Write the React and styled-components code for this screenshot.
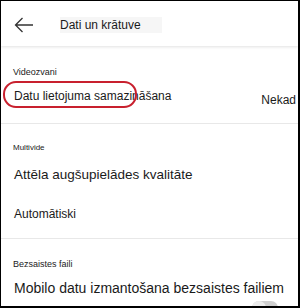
import styled, { createGlobalStyle } from 'styled-components';

const Global = createGlobalStyle`
  html, body { margin: 0; padding: 0; background: #fff; }
  body { font-family: "Liberation Sans", Arial, sans-serif; color: #1a1a1a; }
`;

const Frame = styled.div`
  width: 300px;
  height: 308px;
  box-sizing: border-box;
  border-style: solid;
  border-color: #000;
  border-width: 1px 2px 2px 1px;
  overflow: hidden;
  display: flex;
  flex-direction: column;
  background: #fff;
`;

const Header = styled.div`
  height: 45px;
  flex: none;
  display: flex;
  align-items: flex-start;
  padding: 16px 0 0 13px;
  box-sizing: border-box;
  box-shadow: 0 1px 3px rgba(0, 0, 0, 0.12);
  position: relative;
  z-index: 1;
`;

const Back = styled.button`
  border: none;
  background: none;
  padding: 0;
  width: 20px;
  height: 16px;
  display: flex;
  cursor: pointer;
`;

const Title = styled.span`
  margin-left: 26px;
  font-size: 12px;
  line-height: 16px;
  padding-right: 21px;
  background: #f6f6f6;
`;

const Section = styled.section`
  padding: ${(p) => p.$top}px 2px ${(p) => p.$bottom}px 12px;
  border-top: ${(p) => (p.$divided ? '1px solid #e8e8e8' : 'none')};
  display: flex;
  flex-direction: column;
`;

const Label = styled.div`
  font-size: ${(p) => p.$size}px;
  line-height: 1.15;
  color: #222;
`;

const Row = styled.div`
  display: flex;
  justify-content: space-between;
  align-items: flex-start;
  margin-top: ${(p) => p.$gap}px;
`;

const Primary = styled.span`
  position: relative;
  font-size: ${(p) => p.$size}px;
  line-height: 1.15;
  margin-left: 1px;
`;

const Value = styled.span`
  font-size: 12px;
  line-height: 1.15;
  margin-top: 4px;
`;

const Highlight = styled.span`
  position: absolute;
  left: -11px;
  top: -9px;
  width: 134px;
  height: 27px;
  border: 2px solid #c8202e;
  border-radius: 13px;
  box-sizing: border-box;
  pointer-events: none;
`;

const Toggle = styled.div`
  align-self: flex-end;
  margin: 5px 18px 0 0;
  width: 26px;
  height: 14px;
  border-radius: 7px;
  background: #cfcfcf;
  position: relative;
  &::before {
    content: '';
    position: absolute;
    left: 0;
    top: 0;
    width: 14px;
    height: 14px;
    border-radius: 50%;
    background: #ececec;
  }
`;

export default function App() {
  return (
    <>
      <Global />
      <Frame>
        <Header>
          <Back aria-label="Atpakaļ">
            <svg width="20" height="16" viewBox="0 0 20 16" fill="none">
              <path d="M19 8H1.5M8.5 1L1.5 8l7 7" stroke="#333" strokeWidth="1.3" />
            </svg>
          </Back>
          <Title>Dati un krātuve</Title>
        </Header>

        <Section $top={21} $bottom={15}>
          <Label $size={9}>Videozvani</Label>
          <Row $gap={13}>
            <Primary $size={12}>
              Datu lietojuma samazināšana
              <Highlight />
            </Primary>
            <Value>Nekad</Value>
          </Row>
        </Section>

        <Section $divided $top={19} $bottom={16}>
          <Label $size={8}>Multivide</Label>
          <Row $gap={15}>
            <Primary $size={13.5}>Attēla augšupielādes kvalitāte</Primary>
          </Row>
          <Row $gap={25}>
            <Primary $size={12}>Automātiski</Primary>
          </Row>
        </Section>

        <Section $divided $top={20} $bottom={0}>
          <Label $size={9}>Bezsaistes faili</Label>
          <Row $gap={11}>
            <Primary $size={14}>Mobilo datu izmantošana bezsaistes failiem</Primary>
          </Row>
          <Toggle />
        </Section>
      </Frame>
    </>
  );
}
